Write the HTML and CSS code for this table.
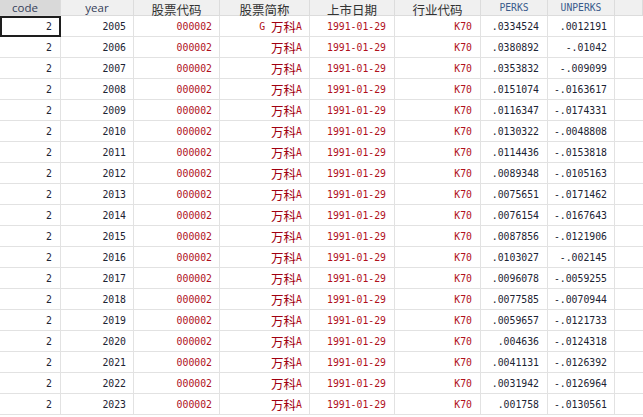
FILE: index.html
```html
<!DOCTYPE html>
<html>
<head>
<meta charset="utf-8">
<link rel="stylesheet" href="styles.css">
</head>
<body>
<div class="grid">
  <div class="h h-sel sans">code</div>
  <div class="h sans">year</div>
  <div class="h cjkh">股票代码</div>
  <div class="h cjkh">股票简称</div>
  <div class="h cjkh">上市日期</div>
  <div class="h cjkh">行业代码</div>
  <div class="h monoh">PERKS</div>
  <div class="h monoh">UNPERKS</div>
  <div class="h"></div>

  <div class="c p8 sel">2</div><div class="c">2005</div><div class="c s">000002</div><div class="c s">G <span class="k">万科</span>A</div><div class="c s p8">1991-01-29</div><div class="c s p8">K70</div><div class="c p8">.0334524</div><div class="c">.0012191</div><div class="c e"></div>
  <div class="c p8">2</div><div class="c">2006</div><div class="c s">000002</div><div class="c s"><span class="k">万科</span>A</div><div class="c s p8">1991-01-29</div><div class="c s p8">K70</div><div class="c p8">.0380892</div><div class="c">-.01042</div><div class="c e"></div>
  <div class="c p8">2</div><div class="c">2007</div><div class="c s">000002</div><div class="c s"><span class="k">万科</span>A</div><div class="c s p8">1991-01-29</div><div class="c s p8">K70</div><div class="c p8">.0353832</div><div class="c">-.009099</div><div class="c e"></div>
  <div class="c p8">2</div><div class="c">2008</div><div class="c s">000002</div><div class="c s"><span class="k">万科</span>A</div><div class="c s p8">1991-01-29</div><div class="c s p8">K70</div><div class="c p8">.0151074</div><div class="c">-.0163617</div><div class="c e"></div>
  <div class="c p8">2</div><div class="c">2009</div><div class="c s">000002</div><div class="c s"><span class="k">万科</span>A</div><div class="c s p8">1991-01-29</div><div class="c s p8">K70</div><div class="c p8">.0116347</div><div class="c">-.0174331</div><div class="c e"></div>
  <div class="c p8">2</div><div class="c">2010</div><div class="c s">000002</div><div class="c s"><span class="k">万科</span>A</div><div class="c s p8">1991-01-29</div><div class="c s p8">K70</div><div class="c p8">.0130322</div><div class="c">-.0048808</div><div class="c e"></div>
  <div class="c p8">2</div><div class="c">2011</div><div class="c s">000002</div><div class="c s"><span class="k">万科</span>A</div><div class="c s p8">1991-01-29</div><div class="c s p8">K70</div><div class="c p8">.0114436</div><div class="c">-.0153818</div><div class="c e"></div>
  <div class="c p8">2</div><div class="c">2012</div><div class="c s">000002</div><div class="c s"><span class="k">万科</span>A</div><div class="c s p8">1991-01-29</div><div class="c s p8">K70</div><div class="c p8">.0089348</div><div class="c">-.0105163</div><div class="c e"></div>
  <div class="c p8">2</div><div class="c">2013</div><div class="c s">000002</div><div class="c s"><span class="k">万科</span>A</div><div class="c s p8">1991-01-29</div><div class="c s p8">K70</div><div class="c p8">.0075651</div><div class="c">-.0171462</div><div class="c e"></div>
  <div class="c p8">2</div><div class="c">2014</div><div class="c s">000002</div><div class="c s"><span class="k">万科</span>A</div><div class="c s p8">1991-01-29</div><div class="c s p8">K70</div><div class="c p8">.0076154</div><div class="c">-.0167643</div><div class="c e"></div>
  <div class="c p8">2</div><div class="c">2015</div><div class="c s">000002</div><div class="c s"><span class="k">万科</span>A</div><div class="c s p8">1991-01-29</div><div class="c s p8">K70</div><div class="c p8">.0087856</div><div class="c">-.0121906</div><div class="c e"></div>
  <div class="c p8">2</div><div class="c">2016</div><div class="c s">000002</div><div class="c s"><span class="k">万科</span>A</div><div class="c s p8">1991-01-29</div><div class="c s p8">K70</div><div class="c p8">.0103027</div><div class="c">-.002145</div><div class="c e"></div>
  <div class="c p8">2</div><div class="c">2017</div><div class="c s">000002</div><div class="c s"><span class="k">万科</span>A</div><div class="c s p8">1991-01-29</div><div class="c s p8">K70</div><div class="c p8">.0096078</div><div class="c">-.0059255</div><div class="c e"></div>
  <div class="c p8">2</div><div class="c">2018</div><div class="c s">000002</div><div class="c s"><span class="k">万科</span>A</div><div class="c s p8">1991-01-29</div><div class="c s p8">K70</div><div class="c p8">.0077585</div><div class="c">-.0070944</div><div class="c e"></div>
  <div class="c p8">2</div><div class="c">2019</div><div class="c s">000002</div><div class="c s"><span class="k">万科</span>A</div><div class="c s p8">1991-01-29</div><div class="c s p8">K70</div><div class="c p8">.0059657</div><div class="c">-.0121733</div><div class="c e"></div>
  <div class="c p8">2</div><div class="c">2020</div><div class="c s">000002</div><div class="c s"><span class="k">万科</span>A</div><div class="c s p8">1991-01-29</div><div class="c s p8">K70</div><div class="c p8">.004636</div><div class="c">-.0124318</div><div class="c e"></div>
  <div class="c p8">2</div><div class="c">2021</div><div class="c s">000002</div><div class="c s"><span class="k">万科</span>A</div><div class="c s p8">1991-01-29</div><div class="c s p8">K70</div><div class="c p8">.0041131</div><div class="c">-.0126392</div><div class="c e"></div>
  <div class="c p8">2</div><div class="c">2022</div><div class="c s">000002</div><div class="c s"><span class="k">万科</span>A</div><div class="c s p8">1991-01-29</div><div class="c s p8">K70</div><div class="c p8">.0031942</div><div class="c">-.0126964</div><div class="c e"></div>
  <div class="c p8">2</div><div class="c">2023</div><div class="c s">000002</div><div class="c s"><span class="k">万科</span>A</div><div class="c s p8">1991-01-29</div><div class="c s p8">K70</div><div class="c p8">.001758</div><div class="c">-.0130561</div><div class="c e"></div>
</div>
</body>
</html>
```

FILE: styles.css
```css
html, body {
  margin: 0;
  padding: 0;
  background: #ffffff;
  overflow: hidden;
}
.grid {
  display: grid;
  grid-template-columns: 61px 73px 86px 90px 85px 86px 67px 67px 28px;
  grid-auto-rows: 21px;
  grid-template-rows: 16px;
  width: 643px;
}
.h {
  box-sizing: border-box;
  height: 16px;
  background: #f0f0f0;
  border-right: 1px solid #dcdcdc;
  border-bottom: 1px solid #dcdcdc;
  display: flex;
  align-items: center;
  justify-content: center;
  color: #3a3a3a;
  white-space: nowrap;
}
.h-sel {
  background: #d9d9d9;
  justify-content: flex-start;
  padding-left: 12px;
}
.sans {
  font-family: "Open Sans", "Noto Sans", sans-serif;
  font-size: 11.5px;
  color: #34405a;
}
.cjkh {
  font-family: "Noto Sans CJK SC", sans-serif;
  font-size: 12.5px;
  color: #333333;
  line-height: normal;
  align-items: flex-start;
}
.monoh {
  font-family: "DejaVu Sans Mono", monospace;
  font-size: 9.7px;
  color: #3a5b8c;
}
.c {
  box-sizing: border-box;
  border-right: 1px solid #e2e2e2;
  border-bottom: 1px solid #e2e2e2;
  display: flex;
  align-items: center;
  justify-content: flex-end;
  padding-right: 7px;
  font-family: "DejaVu Sans Mono", monospace;
  font-size: 9.8px;
  color: #1c2333;
  white-space: pre;
}
.p8 {
  padding-right: 8px;
}
.s {
  color: #b0101a;
}
.k {
  font-family: "Noto Sans CJK SC", sans-serif;
  font-size: 12.5px;
  color: #a00010;
}
.sel {
  border: 2px solid #1e1e1e;
  padding-right: 7px;
}
.e {
  border-right: none;
}
```
